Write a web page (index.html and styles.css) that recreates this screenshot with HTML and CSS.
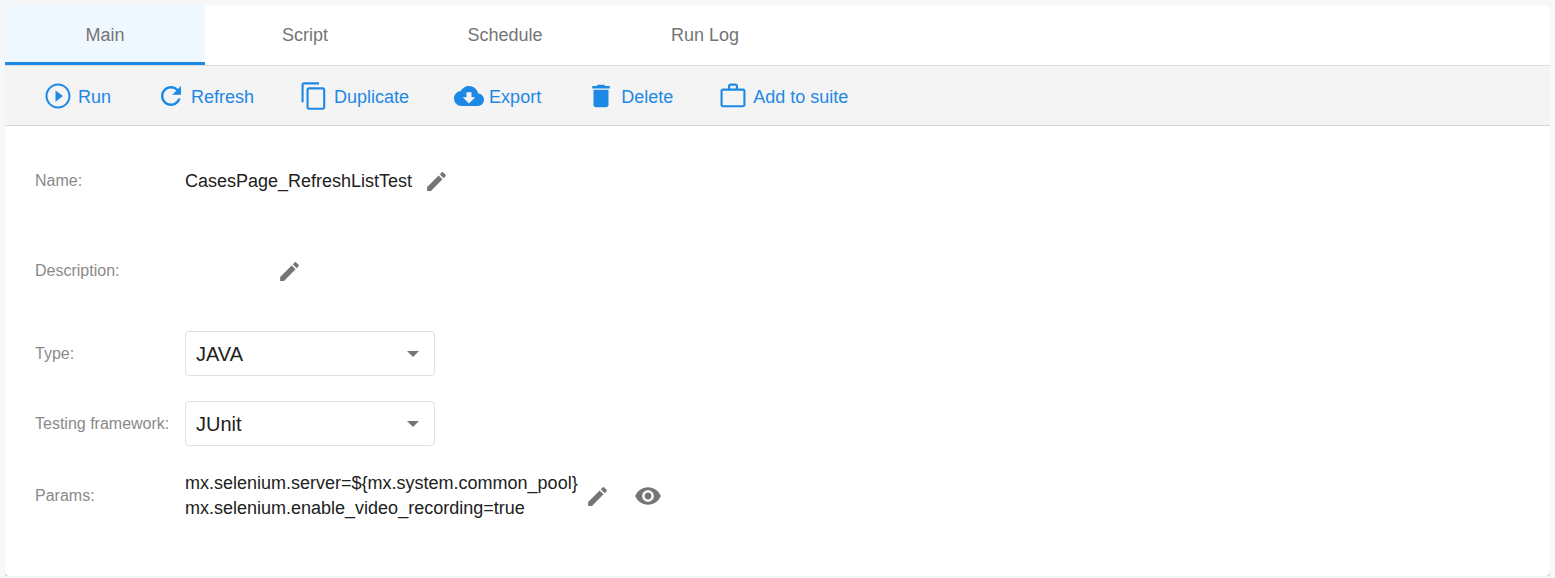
FILE: index.html
```html
<!DOCTYPE html>
<html lang="en">
<head>
    <meta charset="UTF-8">
    <meta name="viewport" content="width=device-width, initial-scale=1.0">
    <title>CasesPage_RefreshListTest</title>
    <link rel="stylesheet" href="styles.css">
</head>
<body>
<main class="card">
    <nav class="tabs">
        <a class="tab active" href="#main">Main</a>
        <a class="tab" href="#script">Script</a>
        <a class="tab" href="#schedule">Schedule</a>
        <a class="tab" href="#run-log">Run Log</a>
    </nav>
    <div class="toolbar">
        <button class="tool" type="button">
            <svg viewBox="0 0 24 24"><path d="M10 16.500l6-4.500-6-4.500v9zM12 2C6.480 2 2 6.480 2 12s4.480 10 10 10 10-4.480 10-10S17.520 2 12 2zm0 18.400c-4.600 0-8.400-3.800-8.400-8.400s3.800-8.400 8.400-8.400 8.400 3.800 8.400 8.400-3.800 8.400-8.400 8.400z"/></svg>
            <span>Run</span>
        </button>
        <button class="tool" type="button">
            <svg viewBox="0 0 24 24"><path d="M17.650 6.350C16.200 4.900 14.210 4 12 4c-4.420 0-7.990 3.580-7.990 8s3.570 8 7.990 8c3.730 0 6.840-2.550 7.730-6h-2.080c-.82 2.330-3.040 4-5.650 4-3.310 0-6-2.690-6-6s2.690-6 6-6c1.660 0 3.140.69 4.220 1.780L13 11h7V4l-2.350 2.350z"/></svg>
            <span>Refresh</span>
        </button>
        <button class="tool" type="button">
            <svg viewBox="0 0 24 24"><path d="M16 1H4c-1.100 0-2 .9-2 2v14h1.700V2.700H16V1zm3 4H8c-1.100 0-2 .9-2 2v14c0 1.100.9 2 2 2h11c1.100 0 2-.9 2-2V7c0-1.100-.9-2-2-2zm.3 16.300H7.700V6.700h11.600v14.600z"/></svg>
            <span>Duplicate</span>
        </button>
        <button class="tool" type="button">
            <svg viewBox="0 0 24 24"><path d="M19.350 10.040C18.670 6.590 15.640 4 12 4 9.110 4 6.600 5.640 5.350 8.040 2.340 8.360 0 10.910 0 14c0 3.310 2.690 6 6 6h13c2.760 0 5-2.240 5-5 0-2.640-2.050-4.780-4.650-4.960zM17 13l-5 5-5-5h3V9h4v4h3z"/></svg>
            <span>Export</span>
        </button>
        <button class="tool" type="button">
            <svg viewBox="0 0 24 24"><path d="M6 19c0 1.100.9 2 2 2h8c1.100 0 2-.9 2-2V7H6v12zM19 4h-3.500l-1-1h-5l-1 1H5v2h14V4z"/></svg>
            <span>Delete</span>
        </button>
        <button class="tool" type="button">
            <svg viewBox="0 0 24 24"><path d="M20 6h-4V4c0-1.110-.89-2-2-2h-4c-1.110 0-2 .89-2 2v2H4c-1.110 0-2 .89-2 2v11c0 1.110.89 2 2 2h16c1.110 0 2-.89 2-2V8c0-1.110-.89-2-2-2zM9.700 3.700h4.600V6H9.700V3.700zM20.300 19.300H3.700V7.700h16.600v11.600z"/></svg>
            <span>Add to suite</span>
        </button>
    </div>
    <form class="details">
        <div class="row row-name">
            <span class="label">Name:</span>
            <span class="value">CasesPage_RefreshListTest</span>
            <button class="icon-btn" type="button" aria-label="Edit name">
                <svg viewBox="0 0 24 24"><path d="M3 17.250V21h3.750L17.810 9.940l-3.750-3.750L3 17.250zM20.710 7.040c.39-.39.39-1.020 0-1.410l-2.340-2.340c-.39-.39-1.020-.39-1.410 0l-1.830 1.830 3.750 3.750 1.830-1.830z"/></svg>
            </button>
        </div>
        <div class="row row-description">
            <span class="label">Description:</span>
            <span class="value empty"></span>
            <button class="icon-btn" type="button" aria-label="Edit description">
                <svg viewBox="0 0 24 24"><path d="M3 17.250V21h3.750L17.810 9.940l-3.750-3.750L3 17.250zM20.710 7.040c.39-.39.39-1.020 0-1.410l-2.340-2.340c-.39-.39-1.020-.39-1.410 0l-1.830 1.830 3.750 3.750 1.830-1.830z"/></svg>
            </button>
        </div>
        <div class="row">
            <label class="label" for="type">Type:</label>
            <select class="select" id="type">
                <option>JAVA</option>
            </select>
        </div>
        <div class="row">
            <label class="label" for="framework">Testing framework:</label>
            <select class="select" id="framework">
                <option>JUnit</option>
            </select>
        </div>
        <div class="row">
            <span class="label">Params:</span>
            <span class="value params">mx.selenium.server=${mx.system.common_pool}<br>mx.selenium.enable_video_recording=true</span>
            <button class="icon-btn" type="button" aria-label="Edit params">
                <svg viewBox="0 0 24 24"><path d="M3 17.250V21h3.750L17.810 9.940l-3.750-3.750L3 17.250zM20.710 7.040c.39-.39.39-1.020 0-1.410l-2.340-2.340c-.39-.39-1.020-.39-1.410 0l-1.830 1.830 3.750 3.750 1.830-1.830z"/></svg>
            </button>
            <button class="icon-btn eye" type="button" aria-label="Show params">
                <svg viewBox="0 0 24 24"><path d="M12 4.500C7 4.500 2.730 7.610 1 12c1.730 4.390 6 7.500 11 7.500s9.270-3.110 11-7.500c-1.730-4.390-6-7.500-11-7.500zM12 17c-2.760 0-5-2.240-5-5s2.240-5 5-5 5 2.240 5 5-2.240 5-5 5zm0-8c-1.660 0-3 1.340-3 3s1.340 3 3 3 3-1.340 3-3-1.340-3-3-3z"/></svg>
            </button>
        </div>
    </form>
</main>
</body>
</html>
```
FILE: styles.css
```css
*{
    box-sizing: border-box;
}
body{
    margin: 5px 5px 2px;
    background-color: #f5f7f9;
    font-family: "Liberation Sans", Arial, sans-serif;
    font-size: 18px;
    color: #212121;
}
button{
    border: none;
    background: none;
    padding: 0;
    font: inherit;
    cursor: pointer;
}
svg{
    display: block;
    fill: currentColor;
}
.tabs{
    display: flex;
    background-color: #fff;
    border-bottom: 1px solid #e0e0e0;
    border-radius: 5px 5px 0 0;
    box-shadow: 0 5px 20px rgba(0, 0, 0, 0.15);
}
.tab{
    width: 200px;
    height: 60px;
    line-height: 60px;
    text-align: center;
    text-decoration: none;
    color: #757575;
}
.tab.active{
    background-color: #f0f8ff;
    border-top-left-radius: 5px;
    box-shadow: inset 0 -3px #1e88e5;
}
/* keeps the shadows of the tabs and the details off the bar */
.toolbar{
    position: relative;
    z-index: 1;
    display: flex;
    gap: 45px;
    height: 60px;
    padding: 0 38px;
    background-color: #f4f4f4;
    border-bottom: 1px solid #d8d8d8;
}
.tool{
    display: flex;
    align-items: center;
    gap: 5px;
    color: #1e88e5;
    white-space: nowrap;
}
.tool svg{
    width: 30px;
    height: 30px;
}
.tool span{
    padding-top: 3px;
}
.details{
    display: flex;
    flex-direction: column;
    gap: 25px;
    padding: 25px 30px 55px;
    background-color: #fff;
    border-radius: 0 0 5px 5px;
    box-shadow: 0 15px 20px rgba(0, 0, 0, 0.2);
}
.row{
    display: flex;
    align-items: center;
}
.row-name{
    min-height: 60px;
}
.row-description{
    min-height: 70px;
}
.label{
    width: 150px;
    font-size: 16px;
    font-weight: 300;
    color: #8a8a8a;
}
.value{
    line-height: 25px;
}
.value.empty{
    width: 80px;
}
.value.params{
    width: 388px;
    white-space: nowrap;
}
.icon-btn{
    margin-left: 12px;
    color: #757575;
}
.icon-btn svg{
    width: 25px;
    height: 25px;
}
.icon-btn.eye{
    margin-left: 24px;
}
.icon-btn.eye svg{
    width: 28px;
    height: 28px;
}
.select{
    appearance: none;
    width: 250px;
    height: 45px;
    padding: 0 40px 0 10px;
    border: 1px solid #e0e0e0;
    border-radius: 4px;
    font: inherit;
    font-size: 20px;
    color: #212121;
    background: #fff url("data:image/svg+xml,%3Csvg xmlns='http://www.w3.org/2000/svg' width='12' height='6'%3E%3Cpath fill='%23757575' d='M0 0h12L6 6z'/%3E%3C/svg%3E") no-repeat right 15px center;
}
```
